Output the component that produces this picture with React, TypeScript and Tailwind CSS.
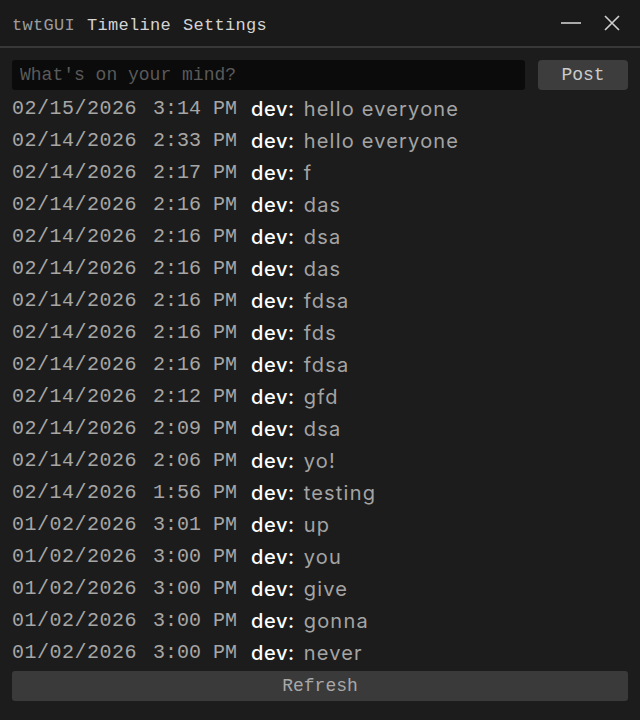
import React from 'react';

const posts: [string, string, string][] = [
  ['02/15/2026', '3:14 PM', 'hello everyone'],
  ['02/14/2026', '2:33 PM', 'hello everyone'],
  ['02/14/2026', '2:17 PM', 'f'],
  ['02/14/2026', '2:16 PM', 'das'],
  ['02/14/2026', '2:16 PM', 'dsa'],
  ['02/14/2026', '2:16 PM', 'das'],
  ['02/14/2026', '2:16 PM', 'fdsa'],
  ['02/14/2026', '2:16 PM', 'fds'],
  ['02/14/2026', '2:16 PM', 'fdsa'],
  ['02/14/2026', '2:12 PM', 'gfd'],
  ['02/14/2026', '2:09 PM', 'dsa'],
  ['02/14/2026', '2:06 PM', 'yo!'],
  ['02/14/2026', '1:56 PM', 'testing'],
  ['01/02/2026', '3:01 PM', 'up'],
  ['01/02/2026', '3:00 PM', 'you'],
  ['01/02/2026', '3:00 PM', 'give'],
  ['01/02/2026', '3:00 PM', 'gonna'],
  ['01/02/2026', '3:00 PM', 'never'],
];

const mono = "font-['Liberation_Mono','DejaVu_Sans_Mono',monospace]";

export default function App() {
  return (
    <div className="w-[640px] h-[720px] bg-[#1c1c1c] flex flex-col overflow-hidden">
      {/* title bar */}
      <div className="h-[48px] bg-[#1a1a1a] border-b-2 border-[#383838] flex items-center pl-3 pr-[19px]">
        <div className={`${mono} text-[17px] tracking-[0.3px] flex gap-[12px] flex-1 mt-[5px]`}>
          <span className="text-[#9c9c9c]">twtGUI</span>
          <span className="text-[#d4d4d4]">Timeline</span>
          <span className="text-[#d4d4d4]">Settings</span>
        </div>
        <svg width="20" height="20" viewBox="0 0 20 20" className="mr-[22px]">
          <line x1="0" y1="10" x2="20" y2="10" stroke="#cfcfcf" strokeWidth="1.6" />
        </svg>
        <svg width="18" height="18" viewBox="0 0 18 18">
          <path d="M2 2 L16 16 M16 2 L2 16" stroke="#cfcfcf" strokeWidth="1.6" />
        </svg>
      </div>

      {/* compose */}
      <div className="flex gap-[13px] px-3 mt-[12px]">
        <input
          placeholder="What's on your mind?"
          className={`${mono} flex-1 h-[30px] bg-[#0b0b0b] rounded-[3px] px-2 text-[18px] text-[#ddd] placeholder:text-[#5a5a5a] outline-none`}
        />
        <button className={`${mono} w-[90px] h-[30px] bg-[#3d3d3d] rounded-[4px] text-[18px] text-[#cbcbcb]`}>
          Post
        </button>
      </div>

      {/* timeline */}
      <div className="flex flex-col px-3 mt-[3px]">
        {posts.map(([date, time, text], i) => (
          <div key={i} className="h-[32px] flex items-center">
            <span className={`${mono} text-[20px] text-[#a6a6a6] w-[141px] tracking-[0.5px]`}>{date}</span>
            <span className={`${mono} text-[20px] text-[#a6a6a6] w-[98px]`}>{time}</span>
            <span className="font-['Inter',sans-serif] text-[20px] text-white font-medium tracking-[0.6px]">dev:</span>
            <span className="font-['Inter',sans-serif] text-[20px] text-[#a4a4a4] ml-[9px] tracking-[1.2px]">{text}</span>
          </div>
        ))}
      </div>

      <div className="px-3 mt-[2px]">
        <button className={`${mono} w-full h-[30px] bg-[#3a3a3a] rounded-[3px] text-[18px] text-[#a8a8a8]`}>
          Refresh
        </button>
      </div>
    </div>
  );
}
